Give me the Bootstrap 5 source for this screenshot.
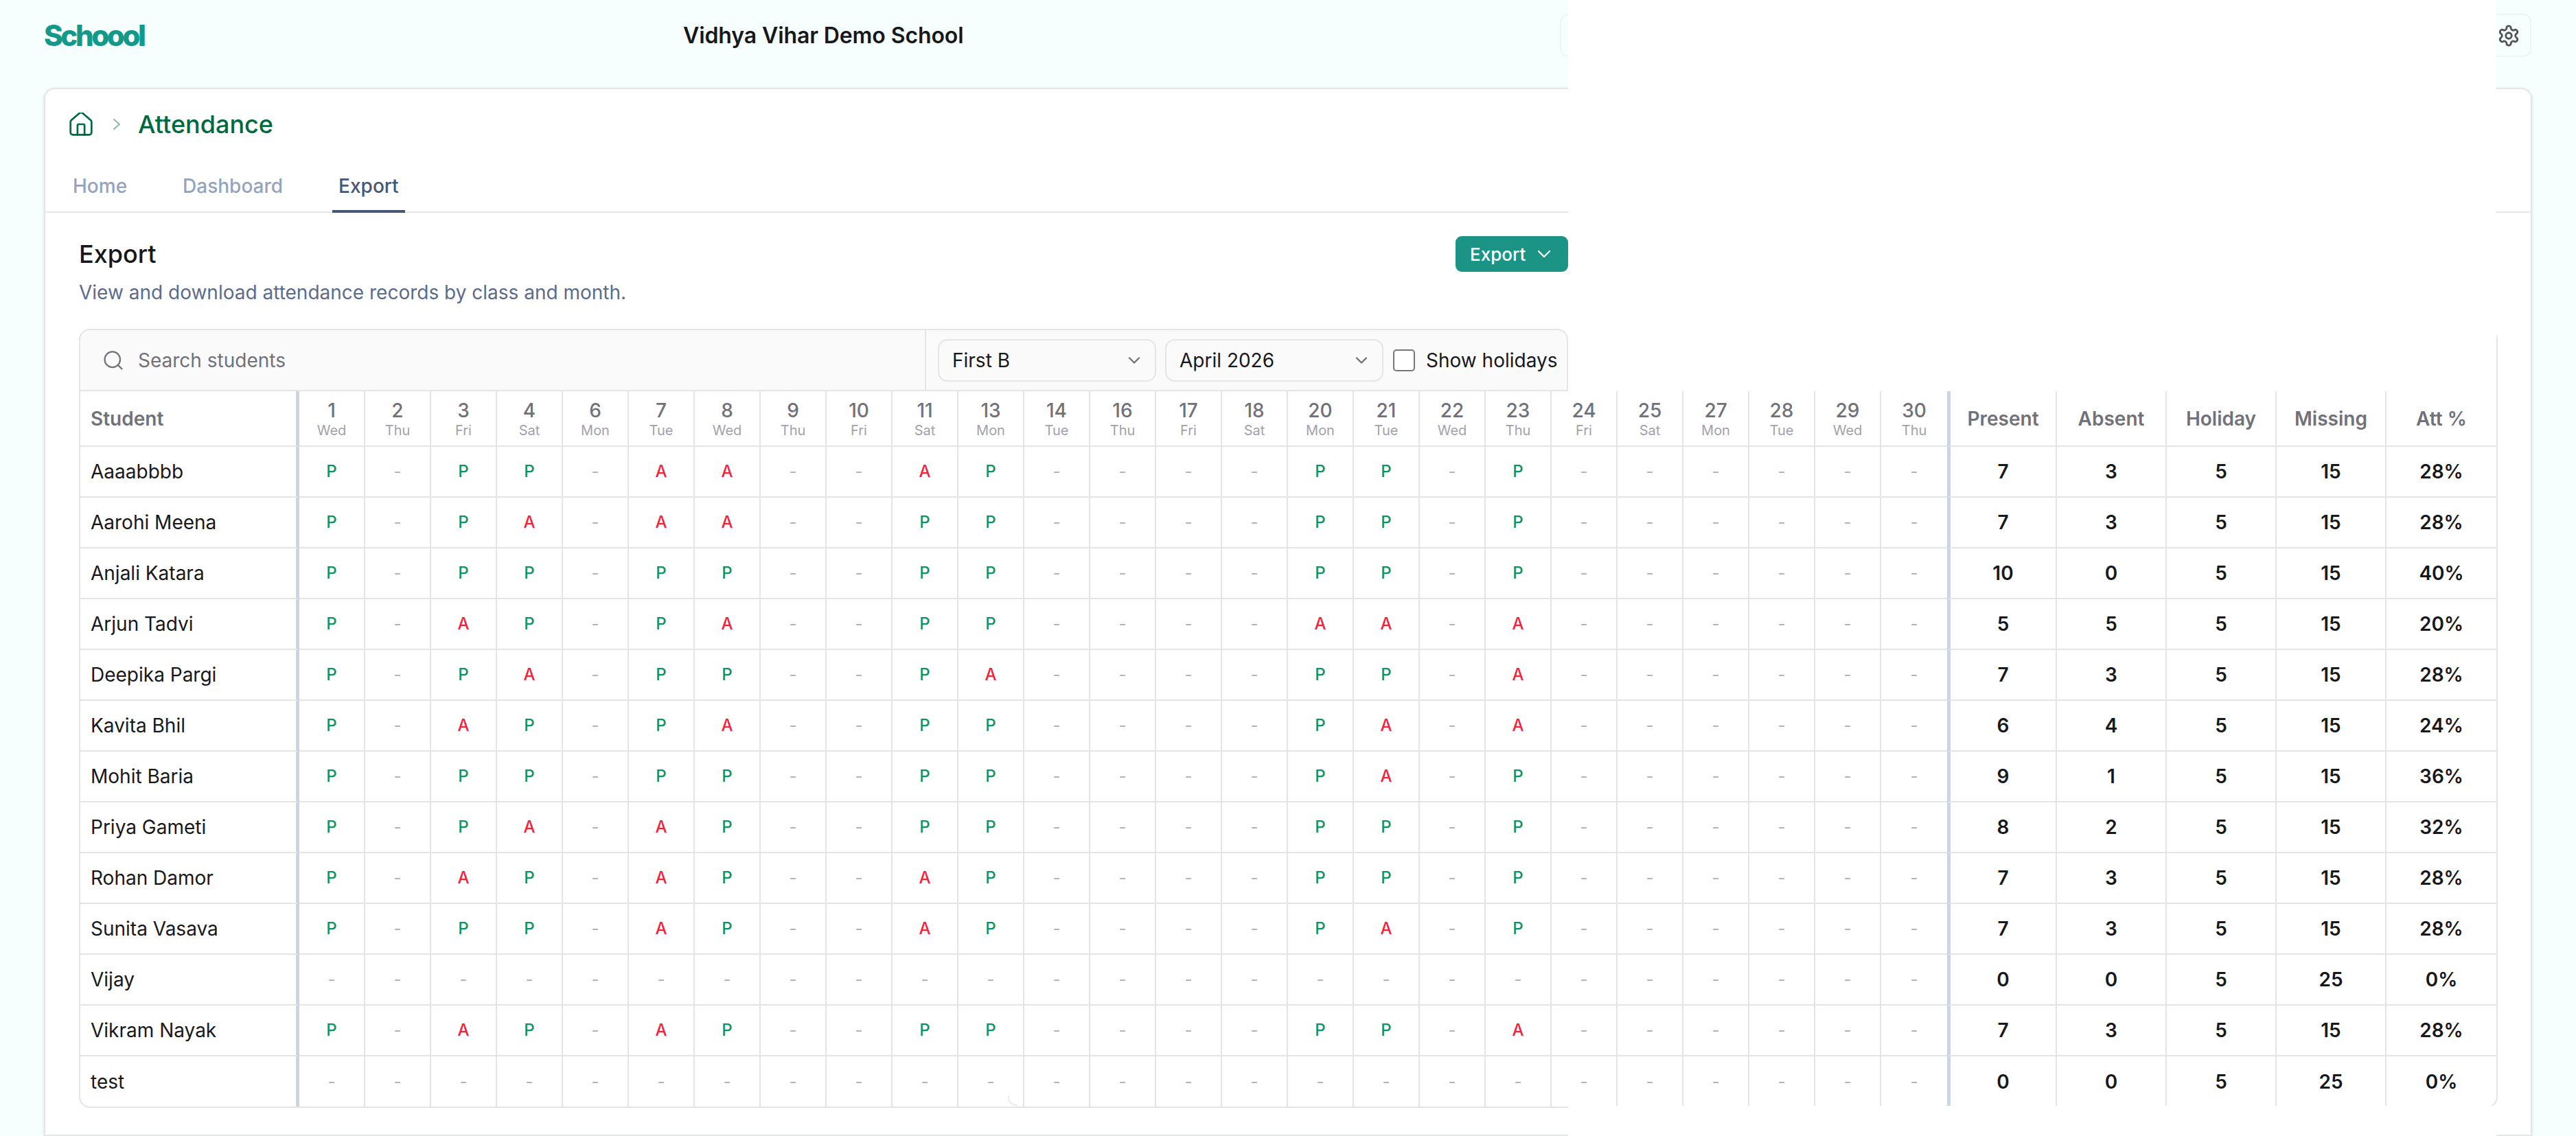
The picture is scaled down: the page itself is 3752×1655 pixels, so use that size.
<!DOCTYPE html>
<html lang="en">
<head>
    <meta charset="UTF-8">
    <meta name="viewport" content="width=device-width, initial-scale=1">
    <title>Attendance Export</title>
    <link href="https://cdn.jsdelivr.net/npm/bootstrap@5.3.0/dist/css/bootstrap.min.css" rel="stylesheet">
    <style>
        html, body { height: 1655px; overflow: hidden; }
        body { background: #f7fffe; font-family: "Inter", "Liberation Sans", sans-serif; color: #18181b; position: relative; }

        .top-bar { height: 128px; padding: 0 65px 25px 64px; }
        .brand-logo { width: 931px; font-size: 42px; font-weight: 800; letter-spacing: -3.4px; color: #12998a; line-height: 1; }
        .school-name { width: 1277px; font-size: 32px; font-weight: 600; letter-spacing: -.1px; }
        .bar-tools { flex: 1; height: 63px; border: 2px solid #f0f3f3; border-radius: 12px; padding-right: 14px; }
        .bar-tools svg { width: 34px; height: 34px; color: #525252; }

        .main-card { margin: 0 64px; border: 2px solid #e5e7e7; border-radius: 16px 16px 0 0; box-shadow: 0 1px 5px rgba(0,0,0,.12); background: #fff; }
        .crumbs { height: 102px; padding: 0 0 0 35px; gap: 29px; font-size: 36px; font-weight: 500; color: #006a3f; }
        .crumbs svg { width: 34px; height: 34px; }
        .crumbs .crumb-sep { width: 12px; height: 18px; margin-right: -4px; color: #93b8a4; }
        .tab-strip { height: 78px; padding-left: 31px; border-bottom: 2px solid #e5e5e5; gap: 63px; }
        .tab-link { display: block; height: 78px; padding: 18px 9px 0; font-size: 28px; font-weight: 500; color: #94a3bf; border-bottom: 4px solid transparent; }
        .tab-link.current { color: #475674; border-bottom-color: #475674; }

        .pane { padding: 34px 48px 39px 49px; }
        .pane-head { width: 2169px; height: 135px; }
        .pane-title { font-size: 36px; font-weight: 500; margin: 6px 0 18px; line-height: 40px; }
        .pane-sub { font-size: 28px; color: #5b6b8c; margin: 0; line-height: 36px; }
        .export-btn { height: 52px; width: 164px; background: #1c9485; color: #fff; font-size: 26px; font-weight: 500; border: 0; border-radius: 9px; padding: 0 0 0 21px; gap: 15px; }
        .export-btn svg { width: 24px; height: 24px; }

        .sheet { width: 3523px; border: 2px solid #e5e5e5; border-top: 0; border-radius: 16px; }
        .sheet-tools { width: 2169px; margin-left: -2px; height: 91px; background: #fafafa; border: 2px solid #e5e5e5; border-radius: 16px 16px 0 0; }
        .search-box { width: 1232px; height: 100%; border-right: 2px solid #e5e5e5; padding-left: 33px; gap: 0; }
        .search-box svg { width: 30px; height: 30px; color: #71717a; flex: none; }
        .search-box .form-control { background: transparent; border: 0; box-shadow: none; font-size: 28px; padding: 0 0 0 21px; color: #18181b; }
        .search-box .form-control::placeholder { color: #71717a; opacity: 1; }
        .sheet-tools .form-select { width: 318px; height: 62px; margin-left: 17px; margin-right: -4px; font-size: 28px; padding: 0 0 0 19px; color: #18181b; border: 2px solid #e5e5e5; border-radius: 14px; background-color: #fafafa;
            background-image: url("data:image/svg+xml,%3csvg xmlns='http://www.w3.org/2000/svg' viewBox='0 0 24 24' fill='none' stroke='%2371717a' stroke-width='2' stroke-linecap='round' stroke-linejoin='round'%3e%3cpath d='m6 9 6 6 6-6'/%3e%3c/svg%3e");
            background-size: 28px 28px; background-position: right 16px center; }
        .holiday-check { margin: 0 0 0 18px; gap: 16px; font-size: 28px; white-space: nowrap; }
        .holiday-check .form-check-input { width: 32px; height: 32px; margin: 0; background-color: #fff; border: 2px solid #777; border-radius: 5px; flex: none; }

        .grid-table { width: 3519px; table-layout: fixed; margin: 0; border-collapse: separate; border-spacing: 0; }
        .grid-table > :not(caption) > * > * { padding: 0; border: 0; border-right: 2px solid #e4e4e7; border-bottom: 2px solid #e4e4e7; text-align: center; vertical-align: middle; background: transparent; box-shadow: none; }
        .grid-table > :not(caption) > * > *:last-child { border-right: 0; }
        .grid-table tr > *:first-child { text-align: left; padding-left: 15px; border-right: 5px solid #cbd5e3; }
        .grid-table tr > *.last-day { border-right: 0; }
        .grid-table tr > *.first-stat { border-left: 5px solid #cbd5e3; }
        .grid-table thead th { height: 81px; font-size: 28px; font-weight: 600; color: #71717a; }
        .day-num { display: block; font-size: 28px; font-weight: 500; line-height: 32px; margin-top: 2px; }
        .day-name { display: block; font-size: 20px; font-weight: 400; line-height: 26px; color: #a1a1aa; }
        .grid-table tbody td { height: 74px; font-size: 24px; font-weight: 500; }
        .grid-table tbody tr:last-child td { height: 73px; border-bottom: 0; }
        .grid-table tbody td:first-child { font-size: 28px; font-weight: 400; color: #18181b; }
        .mark-p { color: #059669; }
        .mark-a { color: #f4233c; }
        .mark-none { color: #b3b3b3; font-weight: 400 !important; }
        .grid-table tbody td.stat-cell { font-size: 28px; font-weight: 600; color: #18181b; }

        .blank-panel { position: absolute; left: 2284px; width: 1352px; background: #fff; }
        .blank-top { top: 0; height: 570px; }
        .blank-bottom { top: 1611px; height: 44px; }
        .corner-trace { position: absolute; left: 1468px; top: 1596px; width: 14px; height: 15px; border-left: 2px solid #ececec; border-bottom: 2px solid #ececec; border-radius: 0 0 0 12px; }
    </style>
</head>
<body>
    <header class="top-bar d-flex align-items-center">
        <div class="brand-logo">Schoool</div>
        <div class="school-name">Vidhya Vihar Demo School</div>
        <div class="bar-tools d-flex align-items-center justify-content-end">
            <svg viewBox="0 0 24 24" fill="none" stroke="currentColor" stroke-width="2" stroke-linecap="round" stroke-linejoin="round"><path d="M12.22 2h-.44a2 2 0 0 0-2 2v.18a2 2 0 0 1-1 1.73l-.43.25a2 2 0 0 1-2 0l-.15-.08a2 2 0 0 0-2.73.73l-.22.38a2 2 0 0 0 .73 2.73l.15.1a2 2 0 0 1 1 1.72v.51a2 2 0 0 1-1 1.74l-.15.09a2 2 0 0 0-.73 2.73l.22.38a2 2 0 0 0 2.73.73l.15-.08a2 2 0 0 1 2 0l.43.25a2 2 0 0 1 1 1.73V20a2 2 0 0 0 2 2h.44a2 2 0 0 0 2-2v-.18a2 2 0 0 1 1-1.73l.43-.25a2 2 0 0 1 2 0l.15.08a2 2 0 0 0 2.73-.73l.22-.39a2 2 0 0 0-.73-2.73l-.15-.08a2 2 0 0 1-1-1.74v-.5a2 2 0 0 1 1-1.74l.15-.09a2 2 0 0 0 .73-2.73l-.22-.38a2 2 0 0 0-2.73-.73l-.15.08a2 2 0 0 1-2 0l-.43-.25a2 2 0 0 1-1-1.73V4a2 2 0 0 0-2-2z"/><circle cx="12" cy="12" r="3"/></svg>
        </div>
    </header>

    <div class="main-card">
        <div class="crumbs d-flex align-items-center">
            <svg viewBox="2 2 20 20" fill="none" stroke="currentColor" stroke-width="1.6" stroke-linecap="round" stroke-linejoin="round"><path d="M15 21v-8a1 1 0 0 0-1-1h-4a1 1 0 0 0-1 1v8"/><path d="M3 10a2 2 0 0 1 .709-1.528l7-5.999a2 2 0 0 1 2.582 0l7 5.999A2 2 0 0 1 21 10v9a2 2 0 0 1-2 2H5a2 2 0 0 1-2-2z"/></svg>
            <svg class="crumb-sep" viewBox="0 0 12 18" fill="none" stroke="currentColor" stroke-width="2.2" stroke-linecap="round" stroke-linejoin="round"><path d="m2 2 8 7-8 7"/></svg>
            <span>Attendance</span>
        </div>
        <nav class="tab-strip d-flex align-items-start">
            <a class="tab-link text-decoration-none" href="#">Home</a>
            <a class="tab-link text-decoration-none" href="#">Dashboard</a>
            <a class="tab-link current text-decoration-none" href="#">Export</a>
        </nav>

        <div class="pane">
            <div class="pane-head d-flex justify-content-between align-items-start">
                <div>
                    <h2 class="pane-title">Export</h2>
                    <p class="pane-sub">View and download attendance records by class and month.</p>
                </div>
                <button class="export-btn btn d-flex align-items-center" type="button">Export
                    <svg viewBox="0 0 24 24" fill="none" stroke="currentColor" stroke-width="2.2" stroke-linecap="round" stroke-linejoin="round"><path d="m4 8 8 8 8-8"/></svg>
                </button>
            </div>

            <div class="sheet">
                <div class="sheet-tools d-flex align-items-center">
                    <div class="search-box d-flex align-items-center">
                        <svg viewBox="0 0 24 24" fill="none" stroke="currentColor" stroke-width="1.8" stroke-linecap="round" stroke-linejoin="round"><circle cx="11" cy="11" r="9"/><path d="m22 22-4.5-4.5"/></svg>
                        <input type="text" class="form-control" placeholder="Search students">
                    </div>
                    <select class="form-select"><option>First B</option></select>
                    <select class="form-select"><option>April 2026</option></select>
                    <label class="holiday-check d-flex align-items-center">
                        <input class="form-check-input" type="checkbox">
                        <span>Show holidays</span>
                    </label>
                </div>
                <table class="table grid-table" id="grid">
                    <colgroup id="gridCols"></colgroup>
                    <thead><tr id="gridHead"></tr></thead>
                    <tbody id="gridBody"></tbody>
                </table>
            </div>
        </div>
    </div>

    <div class="blank-panel blank-top"></div>
    <div class="blank-panel blank-bottom"></div>
    <div class="corner-trace"></div>

    <script>
        const days = [[1,'Wed'],[2,'Thu'],[3,'Fri'],[4,'Sat'],[6,'Mon'],[7,'Tue'],[8,'Wed'],[9,'Thu'],[10,'Fri'],[11,'Sat'],[13,'Mon'],[14,'Tue'],[16,'Thu'],[17,'Fri'],[18,'Sat'],[20,'Mon'],[21,'Tue'],[22,'Wed'],[23,'Thu'],[24,'Fri'],[25,'Sat'],[27,'Mon'],[28,'Tue'],[29,'Wed'],[30,'Thu']];
        const markedDays = [1,3,4,7,8,11,13,20,21,23];
        const students = [
            ['Aaaabbbb','PPPAAAPPPP',7,3,5,15,'28%'],
            ['Aarohi Meena','PPAAAPPPPP',7,3,5,15,'28%'],
            ['Anjali Katara','PPPPPPPPPP',10,0,5,15,'40%'],
            ['Arjun Tadvi','PAPPAPPAAA',5,5,5,15,'20%'],
            ['Deepika Pargi','PPAPPPAPPA',7,3,5,15,'28%'],
            ['Kavita Bhil','PAPPAPPPAA',6,4,5,15,'24%'],
            ['Mohit Baria','PPPPPPPPAP',9,1,5,15,'36%'],
            ['Priya Gameti','PPAAPPPPPP',8,2,5,15,'32%'],
            ['Rohan Damor','PAPAPAPPPP',7,3,5,15,'28%'],
            ['Sunita Vasava','PPPAPAPPAP',7,3,5,15,'28%'],
            ['Vijay','',0,0,5,25,'0%'],
            ['Vikram Nayak','PAPAPPPPPA',7,3,5,15,'28%'],
            ['test','',0,0,5,25,'0%']
        ];

        function colTag(w) { return `<col style="width:${w}px">`; }
        document.getElementById('gridCols').innerHTML = colTag(319) + days.map(() => colTag(96)).join('') + [160,160,160,160,160].map(colTag).join('');

        document.getElementById('gridHead').innerHTML = '<th>Student</th>' +
            days.map((d, i) => `<th class="${i === days.length - 1 ? 'last-day' : ''}"><span class="day-num">${d[0]}</span><span class="day-name">${d[1]}</span></th>`).join('') +
            ['Present','Absent','Holiday','Missing','Att %'].map((t, i) => `<th class="${i === 0 ? 'first-stat' : ''}">${t}</th>`).join('');

        document.getElementById('gridBody').innerHTML = students.map(s => {
            const cells = days.map((d, i) => {
                const at = markedDays.indexOf(d[0]);
                const mark = at >= 0 ? s[1][at] : undefined;
                const cls = mark === 'P' ? 'mark-p' : mark === 'A' ? 'mark-a' : 'mark-none';
                const last = i === days.length - 1 ? ' last-day' : '';
                return `<td class="${cls}${last}">${mark || '-'}</td>`;
            }).join('');
            const stats = s.slice(2).map((v, i) => `<td class="stat-cell${i === 0 ? ' first-stat' : ''}">${v}</td>`).join('');
            return `<tr><td>${s[0]}</td>${cells}${stats}</tr>`;
        }).join('');
    </script>
    <script src="https://cdn.jsdelivr.net/npm/bootstrap@5.3.0/dist/js/bootstrap.bundle.min.js"></script>
</body>
</html>
